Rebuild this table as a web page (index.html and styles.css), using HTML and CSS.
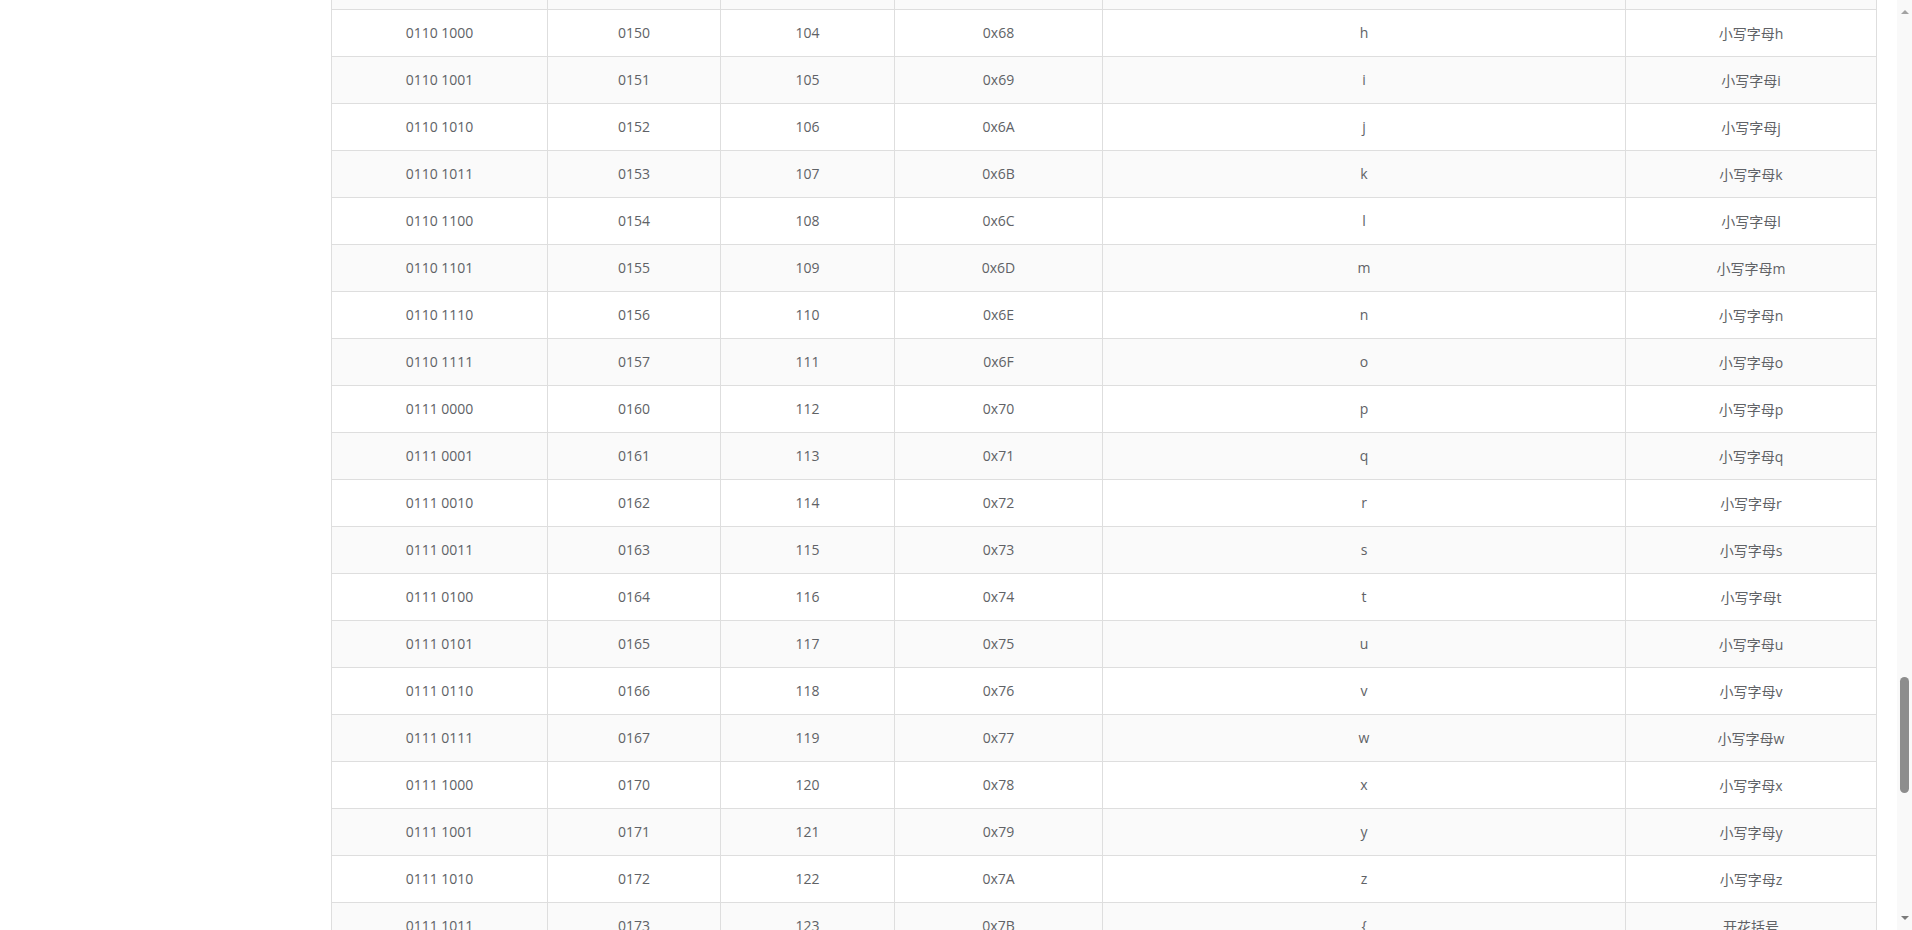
FILE: index.html
```html
<!DOCTYPE html>
<html lang="zh-CN">
<head>
<meta charset="utf-8">
<title>ASCII</title>
<link rel="stylesheet" href="styles.css">
</head>
<body>
<div class="page">
  <aside class="side"></aside>
  <main class="content">
    <div class="table">
      <div class="row"><div class="cell">0110 0111</div><div class="cell">0147</div><div class="cell">103</div><div class="cell">0x67</div><div class="cell">g</div><div class="cell">小写字母g</div></div>
      <div class="row"><div class="cell">0110 1000</div><div class="cell">0150</div><div class="cell">104</div><div class="cell">0x68</div><div class="cell">h</div><div class="cell">小写字母h</div></div>
      <div class="row"><div class="cell">0110 1001</div><div class="cell">0151</div><div class="cell">105</div><div class="cell">0x69</div><div class="cell">i</div><div class="cell">小写字母i</div></div>
      <div class="row"><div class="cell">0110 1010</div><div class="cell">0152</div><div class="cell">106</div><div class="cell">0x6A</div><div class="cell">j</div><div class="cell">小写字母j</div></div>
      <div class="row"><div class="cell">0110 1011</div><div class="cell">0153</div><div class="cell">107</div><div class="cell">0x6B</div><div class="cell">k</div><div class="cell">小写字母k</div></div>
      <div class="row"><div class="cell">0110 1100</div><div class="cell">0154</div><div class="cell">108</div><div class="cell">0x6C</div><div class="cell">l</div><div class="cell">小写字母l</div></div>
      <div class="row"><div class="cell">0110 1101</div><div class="cell">0155</div><div class="cell">109</div><div class="cell">0x6D</div><div class="cell">m</div><div class="cell">小写字母m</div></div>
      <div class="row"><div class="cell">0110 1110</div><div class="cell">0156</div><div class="cell">110</div><div class="cell">0x6E</div><div class="cell">n</div><div class="cell">小写字母n</div></div>
      <div class="row"><div class="cell">0110 1111</div><div class="cell">0157</div><div class="cell">111</div><div class="cell">0x6F</div><div class="cell">o</div><div class="cell">小写字母o</div></div>
      <div class="row"><div class="cell">0111 0000</div><div class="cell">0160</div><div class="cell">112</div><div class="cell">0x70</div><div class="cell">p</div><div class="cell">小写字母p</div></div>
      <div class="row"><div class="cell">0111 0001</div><div class="cell">0161</div><div class="cell">113</div><div class="cell">0x71</div><div class="cell">q</div><div class="cell">小写字母q</div></div>
      <div class="row"><div class="cell">0111 0010</div><div class="cell">0162</div><div class="cell">114</div><div class="cell">0x72</div><div class="cell">r</div><div class="cell">小写字母r</div></div>
      <div class="row"><div class="cell">0111 0011</div><div class="cell">0163</div><div class="cell">115</div><div class="cell">0x73</div><div class="cell">s</div><div class="cell">小写字母s</div></div>
      <div class="row"><div class="cell">0111 0100</div><div class="cell">0164</div><div class="cell">116</div><div class="cell">0x74</div><div class="cell">t</div><div class="cell">小写字母t</div></div>
      <div class="row"><div class="cell">0111 0101</div><div class="cell">0165</div><div class="cell">117</div><div class="cell">0x75</div><div class="cell">u</div><div class="cell">小写字母u</div></div>
      <div class="row"><div class="cell">0111 0110</div><div class="cell">0166</div><div class="cell">118</div><div class="cell">0x76</div><div class="cell">v</div><div class="cell">小写字母v</div></div>
      <div class="row"><div class="cell">0111 0111</div><div class="cell">0167</div><div class="cell">119</div><div class="cell">0x77</div><div class="cell">w</div><div class="cell">小写字母w</div></div>
      <div class="row"><div class="cell">0111 1000</div><div class="cell">0170</div><div class="cell">120</div><div class="cell">0x78</div><div class="cell">x</div><div class="cell">小写字母x</div></div>
      <div class="row"><div class="cell">0111 1001</div><div class="cell">0171</div><div class="cell">121</div><div class="cell">0x79</div><div class="cell">y</div><div class="cell">小写字母y</div></div>
      <div class="row"><div class="cell">0111 1010</div><div class="cell">0172</div><div class="cell">122</div><div class="cell">0x7A</div><div class="cell">z</div><div class="cell">小写字母z</div></div>
      <div class="row"><div class="cell">0111 1011</div><div class="cell">0173</div><div class="cell">123</div><div class="cell">0x7B</div><div class="cell">{</div><div class="cell">开花括号</div></div>
      <div class="row"><div class="cell">0111 1100</div><div class="cell">0174</div><div class="cell">124</div><div class="cell">0x7C</div><div class="cell">|</div><div class="cell">垂线</div></div>
    </div>
  </main>
  <div class="scrollbar">
    <span class="arrow arrow-up"></span>
    <div class="track"><div class="thumb"></div></div>
    <span class="arrow arrow-down"></span>
  </div>
</div>
</body>
</html>
```

FILE: styles.css
```css
* { box-sizing: border-box; }

html, body {
  margin: 0;
  padding: 0;
  height: 930px;
  overflow: hidden;
  background: #ffffff;
}

body {
  font-family: "Open Sans", "Noto Sans CJK SC", sans-serif;
  font-size: 14px;
  color: #606266;
}

.page {
  display: flex;
  height: 930px;
}

.side {
  width: 331px;
  flex: none;
}

.content {
  width: 1566px;
  flex: none;
  overflow: hidden;
}

.table {
  width: 1546px;
  margin-top: -37px;
}

.row {
  display: grid;
  grid-template-columns: 216px 173px 174px 208px 523px 252px;
  height: 47px;
}

.row:nth-child(odd) {
  background: #fafafa;
}

.cell {
  height: 47px;
  border-left: 1px solid #dedede;
  border-bottom: 1px solid #dedede;
  display: flex;
  align-items: center;
  justify-content: center;
  white-space: nowrap;
  padding-bottom: 1px;
}

.cell:last-child {
  border-right: 1px solid #dedede;
}

.scrollbar {
  width: 15px;
  flex: none;
  background: #f9f9f9;
  display: flex;
  flex-direction: column;
  align-items: center;
}

.track {
  flex: 1;
  width: 100%;
  display: flex;
  flex-direction: column;
  align-items: center;
  padding-top: 663px;
}

.thumb {
  width: 9px;
  height: 116px;
  border-radius: 5px;
  background: #8d8d8d;
}

.arrow {
  display: block;
  width: 0;
  height: 0;
  border-left: 4px solid transparent;
  border-right: 4px solid transparent;
  flex: none;
}

.arrow-up {
  margin-top: 10px;
  border-bottom: 4px solid #a3a3a3;
}

.arrow-down {
  margin-bottom: 10px;
  border-top: 4px solid #7b7b7b;
}
```
